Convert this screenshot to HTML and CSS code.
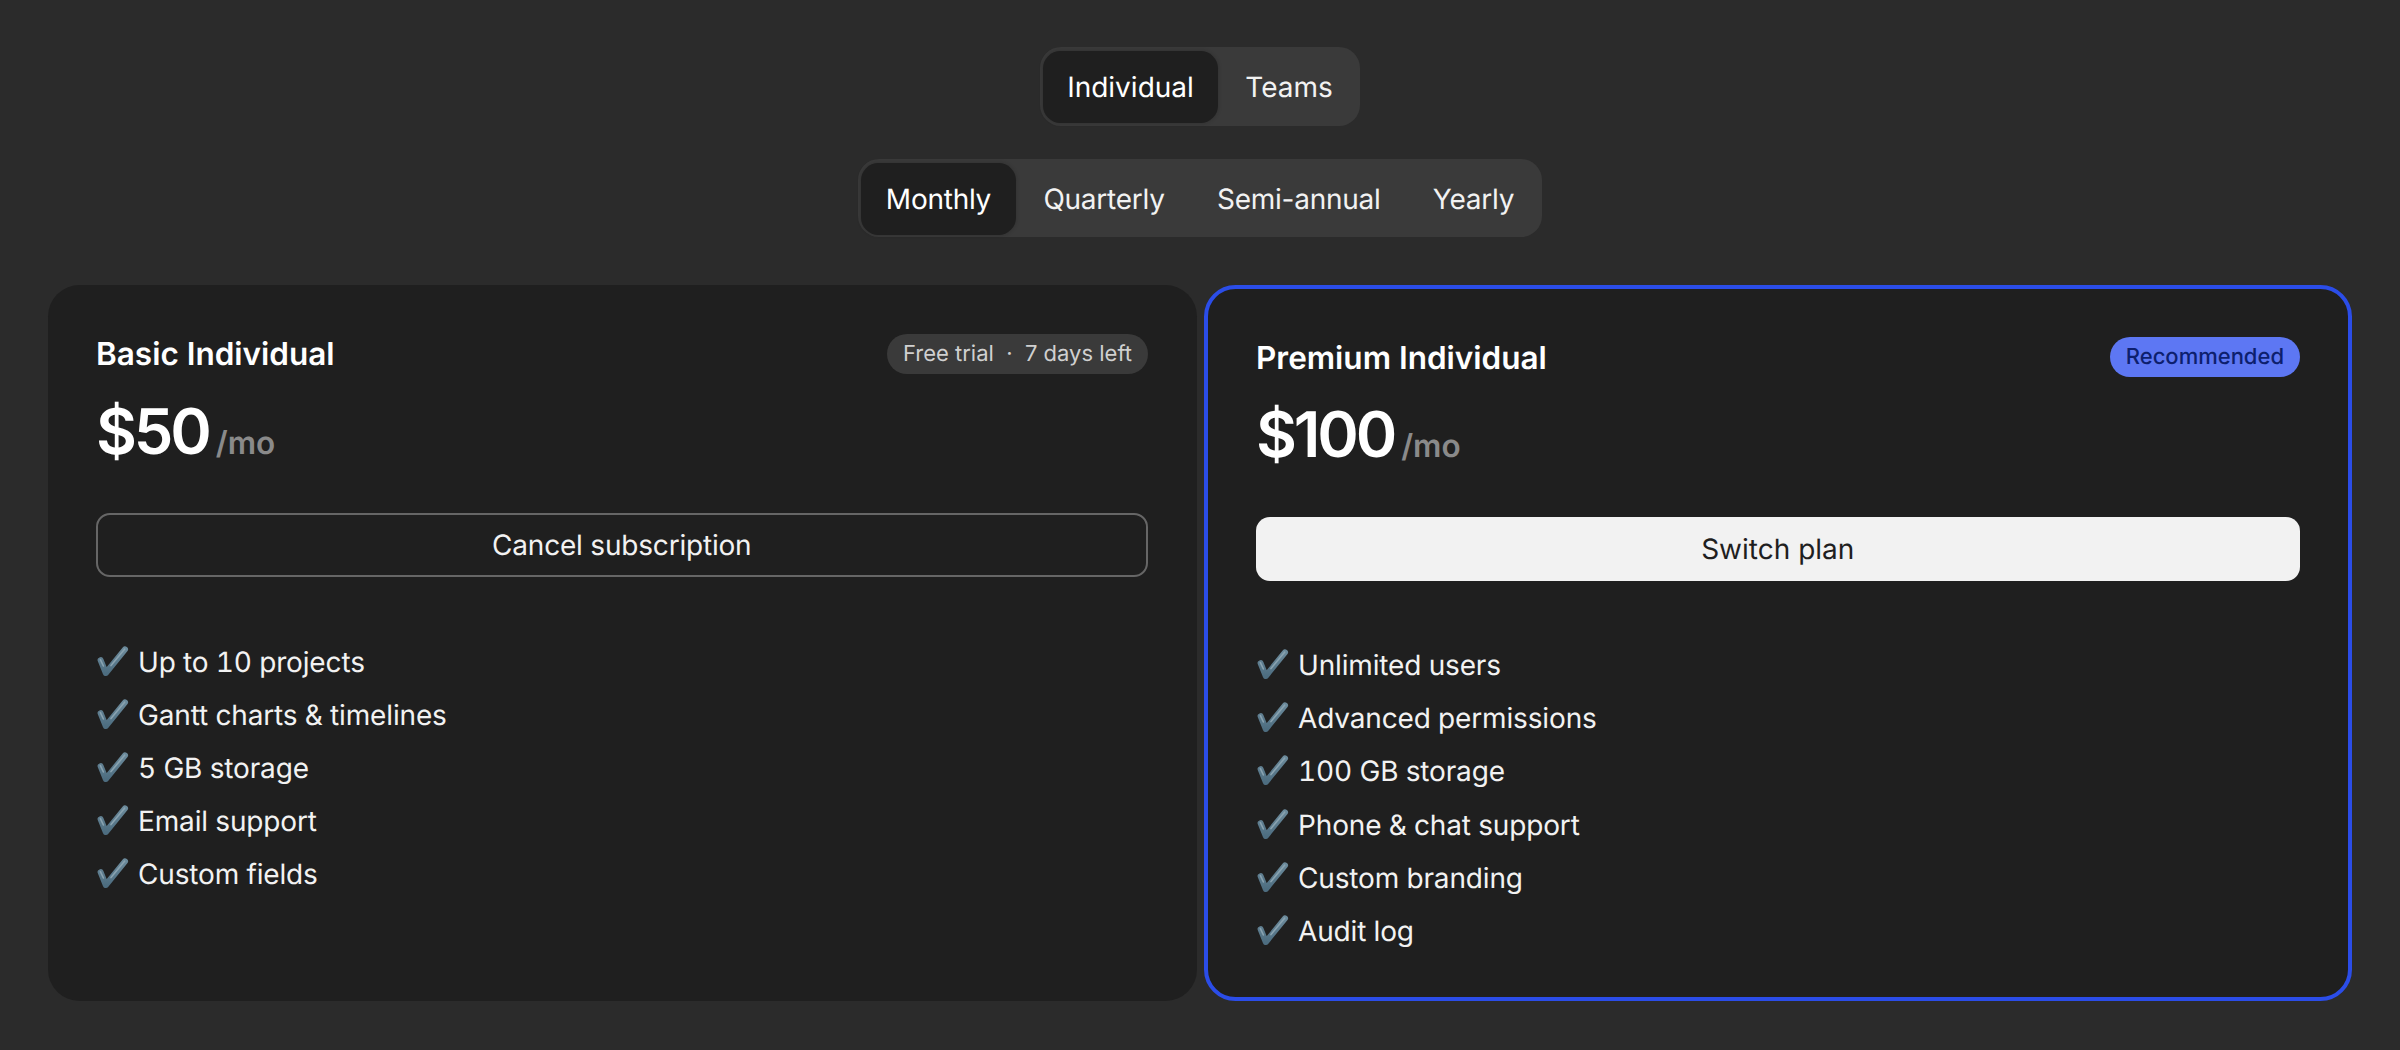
FILE: index.html
```html
<!DOCTYPE html>
<html lang="en">
<head>
<meta charset="utf-8">
<title>Plans</title>
<link rel="stylesheet" href="styles.css">
</head>
<body>
<svg class="defs" width="0" height="0" aria-hidden="true">
  <defs>
    <linearGradient id="chk" x1="0" y1="0" x2="0" y2="1">
      <stop offset="0" stop-color="#6b8a9b"/>
      <stop offset="1" stop-color="#4d6d80"/>
    </linearGradient>
    <symbol id="check" viewBox="0 0 32 32">
      <path d="M3.6 14.2 L8.8 27 L28 3.4" fill="none" stroke="url(#chk)" stroke-width="6" stroke-linecap="round" stroke-linejoin="round"/>
      <path d="M3.4 13.6 L6.4 20 M14 19.6 L27.6 3.2" fill="none" stroke="#8aa3b0" stroke-width="1.6" stroke-linecap="round"/>
    </symbol>
  </defs>
</svg>
<main class="page">
  <div class="tabs">
    <span class="tab active">Individual</span>
    <span class="tab">Teams</span>
  </div>
  <div class="tabs second">
    <span class="tab active">Monthly</span>
    <span class="tab">Quarterly</span>
    <span class="tab">Semi-annual</span>
    <span class="tab">Yearly</span>
  </div>
  <div class="cards">
    <section class="card">
      <div class="head">
        <h2 class="name">Basic Individual</h2>
        <span class="badge trial">Free trial &nbsp;·&nbsp; 7 days left</span>
      </div>
      <div class="price"><span class="amount">$50</span><span class="per">/mo</span></div>
      <button class="cta outline">Cancel subscription</button>
      <ul class="features">
        <li><svg class="tick"><use href="#check"/></svg>Up to 10 projects</li>
        <li><svg class="tick"><use href="#check"/></svg>Gantt charts &amp; timelines</li>
        <li><svg class="tick"><use href="#check"/></svg>5 GB storage</li>
        <li><svg class="tick"><use href="#check"/></svg>Email support</li>
        <li><svg class="tick"><use href="#check"/></svg>Custom fields</li>
      </ul>
    </section>
    <section class="card featured">
      <div class="head">
        <h2 class="name">Premium Individual</h2>
        <span class="badge rec">Recommended</span>
      </div>
      <div class="price"><span class="amount">$100</span><span class="per">/mo</span></div>
      <button class="cta solid">Switch plan</button>
      <ul class="features">
        <li><svg class="tick"><use href="#check"/></svg>Unlimited users</li>
        <li><svg class="tick"><use href="#check"/></svg>Advanced permissions</li>
        <li><svg class="tick"><use href="#check"/></svg>100 GB storage</li>
        <li><svg class="tick"><use href="#check"/></svg>Phone &amp; chat support</li>
        <li><svg class="tick"><use href="#check"/></svg>Custom branding</li>
        <li><svg class="tick"><use href="#check"/></svg>Audit log</li>
      </ul>
    </section>
  </div>
</main>
</body>
</html>
```
FILE: styles.css
```css
* { box-sizing: border-box; }
html, body { margin: 0; height: 100%; }
body {
  background: #2b2b2b;
  color: #fff;
  font-family: Inter, "Liberation Sans", sans-serif;
  text-rendering: geometricPrecision;
  overflow: hidden;
}
.defs { position: absolute; }
.page {
  display: flex;
  flex-direction: column;
  align-items: center;
  padding: 47px 48px 0;
}
.tabs {
  display: flex;
  gap: 3.5px;
  padding: 3.5px;
  background: #3a3a3a;
  border-radius: 21px;
}
.tabs.second { margin-top: 33px; padding-bottom: 2px; }
.tab {
  display: flex;
  align-items: center;
  height: 72px;
  padding: 0 24px;
  border-radius: 17.5px;
  font-size: 28px;
  color: #f2f2f2;
}
.second .tab { padding: 0 24.4px; letter-spacing: -0.25px; }
.tab.active {
  background: #1f1f1f;
  color: #fff;
  box-shadow: 0 0 4px rgba(0, 0, 0, 0.2);
}
.cards {
  display: grid;
  grid-template-columns: 1fr 1fr;
  gap: 7px;
  width: 100%;
  margin-top: 48px;
}
.card {
  height: 716px;
  padding: 49px 49px 49px 48px;
  background: #1f1f1f;
  border-radius: 31.5px;
}
.card.featured { border: 4px solid #2b4de8; padding: 48.5px; }
.head {
  display: flex;
  align-items: center;
  justify-content: space-between;
  height: 40px;
}
.name { margin: 0; font-size: 31.5px; font-weight: 600; }
.badge {
  display: flex;
  align-items: center;
  height: 40px;
  padding: 0 15.5px;
  border-radius: 20px;
  font-size: 22px;
}
.badge.trial { background: #3a3a3a; color: #d0d0d0; }
.badge.rec { background: #5d77f3; color: #0d1f6e; font-weight: 450; }
.price {
  display: flex;
  align-items: baseline;
  gap: 7px;
  height: 73.5px;
  margin-top: 20px;
}
.amount { font-size: 63px; font-weight: 600; letter-spacing: -0.05em; }
.per { font-size: 31.5px; font-weight: 600; color: #8a8a8a; }
.cta {
  display: block;
  width: 100%;
  height: 64px;
  margin-top: 46px;
  border-radius: 14px;
  font: 400 28px Inter, "Liberation Sans", sans-serif;
  text-rendering: geometricPrecision;
}
.cta.outline { background: transparent; border: 2px solid #666; color: #f2f2f2; letter-spacing: -0.2px; }
.cta.solid { background: #f2f2f2; border: 0; color: #1f1f1f; }
.features {
  margin: 58px 0 0;
  padding: 0;
  list-style: none;
}
.features li {
  display: flex;
  align-items: center;
  height: 53.2px;
  font-size: 28px;
  font-variant-numeric: tabular-nums;
  letter-spacing: -0.15px;
  color: #f2f2f2;
}
.tick { flex: none; width: 32px; height: 32px; margin: 0 9px 0 1px; }
```
